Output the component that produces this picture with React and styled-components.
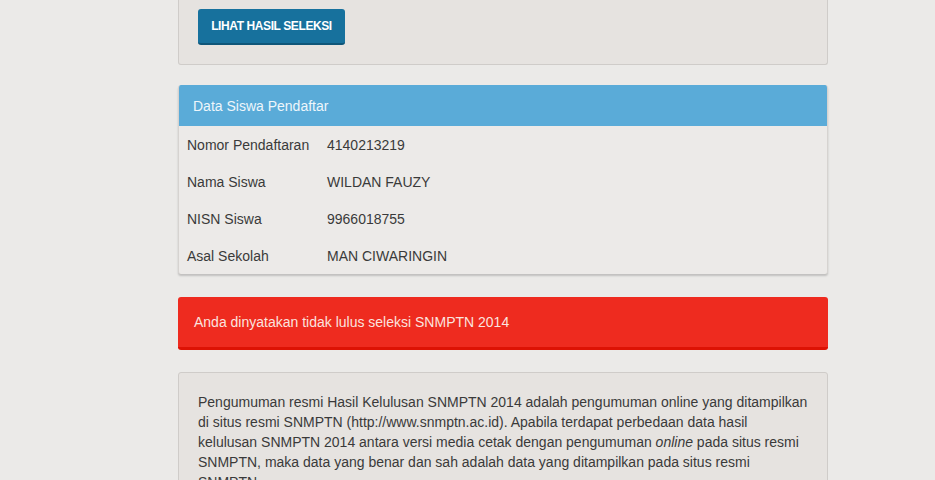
import React from 'react';
import styled, { createGlobalStyle } from 'styled-components';

const GlobalStyle = createGlobalStyle`
  body {
    margin: 0;
    background: #ebeae8;
    font-family: "Liberation Sans", Arial, sans-serif;
    color: #3a3a3a;
  }
`;

// Page column
const Page = styled.div`
  width: 650px;
  margin-left: 178px;
  display: flex;
  flex-direction: column;
`;

const Panel = styled.div`
  background: #e6e3e0;
  border: 1px solid #cfccc9;
  border-top: ${(props) => (props.cutTop ? 'none' : '1px solid #cfccc9')};
  border-radius: ${(props) => (props.cutTop ? '0 0 3px 3px' : '3px')};
  padding: ${(props) => props.pad || '20px'};
  margin-bottom: ${(props) => props.gap || '0'};
`;

const Button = styled.button`
  display: inline-flex;
  align-items: center;
  justify-content: center;
  width: 147px;
  height: 36px;
  background: #17719d;
  border: none;
  border-bottom: 2px solid #0f5679;
  border-radius: 3px;
  color: #fff;
  font-family: "Liberation Sans", Arial, sans-serif;
  font-weight: bold;
  font-size: 12px;
  letter-spacing: -0.4px;
  text-transform: uppercase;
  padding: 0;
  cursor: pointer;
`;

const DataCard = styled.div`
  background: #eceae8;
  border-left: 1px solid #d6d3d0;
  border-right: 1px solid #d6d3d0;
  border-radius: 3px;
  box-shadow: 0 2px 2px rgba(0, 0, 0, 0.18);
  margin-bottom: 23px;
  overflow: hidden;
`;

const CardHeader = styled.div`
  height: 41px;
  background: #5aabd8;
  color: #eef6fb;
  font-size: 14px;
  display: flex;
  align-items: center;
  padding-left: 15px;
  margin: 0 -1px;
`;

const Row = styled.div`
  display: flex;
  align-items: center;
  height: 37px;
  padding-left: 8px;
  font-size: 14px;
  color: #3a3a3a;
`;

const Label = styled.span`
  width: 140px;
`;

const Alert = styled.div`
  height: 50px;
  background: #ee2b1f;
  border-bottom: 3px solid #dd1204;
  border-radius: 3px;
  color: #fbe3df;
  font-size: 14px;
  display: flex;
  align-items: center;
  padding-left: 16px;
  margin-bottom: 22px;
`;

const Notice = styled.p`
  margin: 0;
  font-size: 14px;
  line-height: 20px;
  color: #3a3a3a;

  em {
    font-style: italic;
  }
`;

const rows = [
  ['Nomor Pendaftaran', '4140213219'],
  ['Nama Siswa', 'WILDAN FAUZY'],
  ['NISN Siswa', '9966018755'],
  ['Asal Sekolah', 'MAN CIWARINGIN'],
];

export default function App() {
  return (
    <>
      <GlobalStyle />
      <Page>
        <Panel cutTop pad="9px 20px 19px 19px" gap="20px">
          <Button>Lihat Hasil Seleksi</Button>
        </Panel>

        <DataCard>
          <CardHeader>Data Siswa Pendaftar</CardHeader>
          {rows.map(([label, value]) => (
            <Row key={label}>
              <Label>{label}</Label>
              <span>{value}</span>
            </Row>
          ))}
        </DataCard>

        <Alert>Anda dinyatakan tidak lulus seleksi SNMPTN 2014</Alert>

        <Panel pad="19px 19px 20px">
          <Notice>
            Pengumuman resmi Hasil Kelulusan SNMPTN 2014 adalah pengumuman online yang ditampilkan
            di situs resmi SNMPTN (http://www.snmptn.ac.id). Apabila terdapat perbedaan data hasil
            kelulusan SNMPTN 2014 antara versi media cetak dengan pengumuman <em>online</em> pada situs resmi
            SNMPTN, maka data yang benar dan sah adalah data yang ditampilkan pada situs resmi
            SNMPTN.
          </Notice>
        </Panel>
      </Page>
    </>
  );
}
